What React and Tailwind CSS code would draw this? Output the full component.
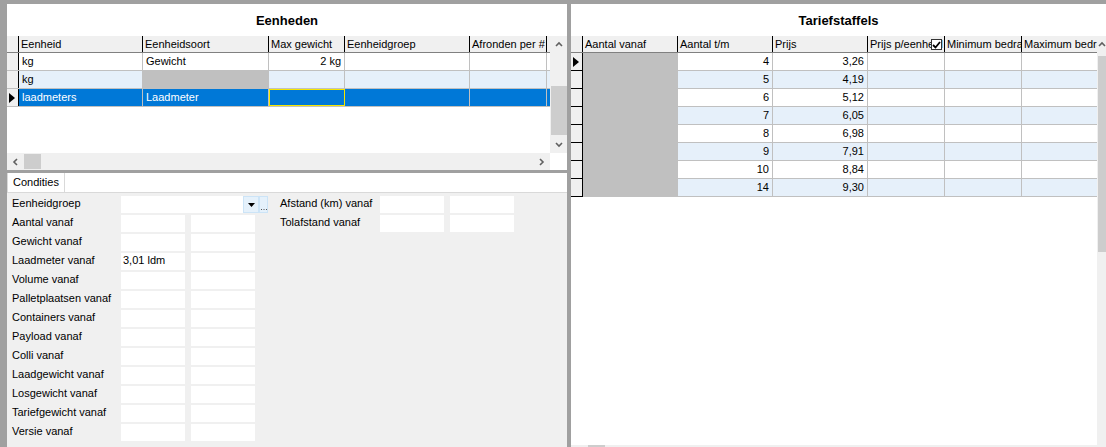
import React from 'react';

const Tri = () => (
    <svg width="6" height="10" viewBox="0 0 6 10" className="ml-[2px]"><polygon points="0,0 6,5 0,10" fill="#000" /></svg>
);

const Chev = ({ dir }) => {
    const paths = {
        up: 'M1 5 L4 2 L7 5',
        down: 'M1 2 L4 5 L7 2',
        left: 'M5 1 L2 4 L5 7',
        right: 'M2 1 L5 4 L2 7',
    };
    const vertical = dir === 'up' || dir === 'down';
    return (
        <svg width={vertical ? 8 : 7} height={vertical ? 7 : 8} viewBox={vertical ? '0 0 8 7' : '0 0 7 8'}>
            <path d={paths[dir]} stroke="#606060" strokeWidth="1.6" fill="none" />
        </svg>
    );
};

const eenhedenCols = [124, 126, 76, 125, 77];
const eenhedenHead = ['Eenheid', 'Eenheidsoort', 'Max gewicht', 'Eenheidgroep', 'Afronden per #'];

const staffels = [
    ['4', '3,26'], ['5', '4,19'], ['6', '5,12'], ['7', '6,05'],
    ['8', '6,98'], ['9', '7,91'], ['10', '8,84'], ['14', '9,30'],
];

const formLabels = [
    'Aantal vanaf', 'Gewicht vanaf', 'Laadmeter vanaf', 'Volume vanaf', 'Palletplaatsen vanaf',
    'Containers vanaf', 'Payload vanaf', 'Colli vanaf', 'Laadgewicht vanaf', 'Losgewicht vanaf',
    'Tariefgewicht vanaf', 'Versie vanaf',
];

const Box = ({ children }) => (
    <div className="w-[64px] h-[17px] bg-white flex items-center pl-[2px] pb-[2px]">{children}</div>
);

const App = () => {
    return (
        <div className="w-[1106px] h-[447px] bg-[#a0a0a0] pt-[4px] pl-[7px] flex overflow-hidden font-['Liberation_Sans',Arial,sans-serif] text-[11px] text-black leading-none">
            {/* Linker paneel */}
            <div className="w-[560px] flex flex-col">
                <div className="h-[166px] bg-white flex flex-col">
                    <div className="h-[32px] flex items-center justify-center font-bold text-[13px]">Eenheden</div>
                    <div className="flex h-[117px]">
                        <div className="w-[543px]">
                            {/* header */}
                            <div className="flex h-[17px] border-b border-[#808080] bg-[#f0f0f0]">
                                <div className="w-[12px] border-r border-black" />
                                {eenhedenHead.map((h, i) => (
                                    <div key={h} style={{ width: eenhedenCols[i] }} className="border-r border-black flex items-center pl-[2px] whitespace-nowrap overflow-hidden">{h}</div>
                                ))}
                            </div>
                            {/* rij 1 */}
                            <div className="flex h-[18px] border-b border-[#c0c0c0]">
                                <div className="w-[12px] bg-[#f0f0f0] border-r border-black" />
                                <div className="w-[124px] border-r border-[#c0c0c0] flex items-center pl-[3px]">kg</div>
                                <div className="w-[126px] border-r border-[#c0c0c0] flex items-center pl-[3px]">Gewicht</div>
                                <div className="w-[76px] border-r border-[#c0c0c0] flex items-center justify-end pr-[3px]">2 kg</div>
                                <div className="w-[125px] border-r border-[#c0c0c0]" />
                                <div className="w-[77px] border-r border-[#c0c0c0]" />
                            </div>
                            {/* rij 2 */}
                            <div className="flex h-[18px] border-b border-[#c0c0c0] bg-[#e6f0fa]">
                                <div className="w-[12px] bg-[#f0f0f0] border-r border-black" />
                                <div className="w-[124px] border-r border-[#c0c0c0] flex items-center pl-[3px]">kg</div>
                                <div className="w-[126px] border-r border-[#c0c0c0] bg-[#c0c0c0]" />
                                <div className="w-[76px] border-r border-[#c0c0c0]" />
                                <div className="w-[125px] border-r border-[#c0c0c0]" />
                                <div className="w-[77px] border-r border-[#c0c0c0]" />
                            </div>
                            {/* rij 3 geselecteerd */}
                            <div className="flex h-[18px] border-b border-[#c0c0c0] bg-[#0078d7] text-white">
                                <div className="w-[12px] bg-[#f0f0f0] border-r border-black flex items-center"><Tri /></div>
                                <div className="w-[124px] border-r border-[#c0c0c0] flex items-center pl-[3px]">laadmeters</div>
                                <div className="w-[126px] border-r border-[#c0c0c0] flex items-center pl-[3px]">Laadmeter</div>
                                <div className="w-[76px] border border-[#f5e600]" />
                                <div className="w-[125px] border-r border-[#c0c0c0]" />
                                <div className="w-[77px] border-r border-[#c0c0c0]" />
                            </div>
                        </div>
                        {/* verticale scrollbar */}
                        <div className="w-[17px] bg-[#f0f0f0] flex flex-col items-center">
                            <div className="h-[17px] flex items-center justify-center"><Chev dir="up" /></div>
                            <div className="h-[33px]" />
                            <div className="w-[16px] h-[49px] bg-[#cdcdcd]" />
                            <div className="h-[1px]" />
                            <div className="h-[17px] flex items-center justify-center"><Chev dir="down" /></div>
                        </div>
                    </div>
                    {/* horizontale scrollbar */}
                    <div className="h-[17px] flex">
                        <div className="w-[543px] bg-[#f0f0f0] flex items-center">
                            <div className="w-[17px] flex justify-center"><Chev dir="left" /></div>
                            <div className="w-[17px] h-[15px] bg-[#cdcdcd]" />
                            <div className="flex-1" />
                            <div className="w-[17px] flex justify-center"><Chev dir="right" /></div>
                        </div>
                        <div className="w-[17px] bg-white" />
                    </div>
                </div>
                <div className="h-[3px]" />
                {/* Condities tab */}
                <div className="flex-1 flex flex-col">
                    <div className="h-[20px] bg-white border-b border-[#d9d9d9] flex">
                        <div className="w-[58px] border-l border-r border-[#d9d9d9] flex items-center justify-center">Condities</div>
                    </div>
                    <div className="flex-1 bg-[#f0f0f0] pt-[3px] pl-[5px] flex flex-col gap-[2px]">
                        <div className="flex h-[17px]">
                            <div className="w-[256px] flex">
                                <div className="w-[109px] flex items-center pb-[3px]">Eenheidgroep</div>
                                <div className="w-[122px] bg-white" />
                                <div className="w-[16px] bg-[#e5f1fb] border border-[#cce4f7] flex items-center justify-center">
                                    <svg width="7" height="4" viewBox="0 0 7 4"><polygon points="0,0 7,0 3.5,4" fill="#000" /></svg>
                                </div>
                                <div className="w-[9px] bg-[#e5f1fb] border border-[#cce4f7] flex items-end justify-center pb-[2px]">
                                    <svg width="6" height="1" viewBox="0 0 6 1">
                                        <rect x="0" y="0" width="1" height="1" fill="#555" />
                                        <rect x="2.5" y="0" width="1" height="1" fill="#555" />
                                        <rect x="5" y="0" width="1" height="1" fill="#555" />
                                    </svg>
                                </div>
                            </div>
                            <div className="ml-[12px] flex">
                                <div className="w-[100px] flex items-center pb-[3px]">Afstand (km) vanaf</div>
                                <Box />
                                <div className="w-[6px]" />
                                <Box />
                            </div>
                        </div>
                        {formLabels.map((label, i) => (
                            <div key={label} className="flex h-[17px]">
                                <div className="w-[256px] flex">
                                    <div className="w-[109px] flex items-center pb-[3px]">{label}</div>
                                    <Box>{label === 'Laadmeter vanaf' ? '3,01 ldm' : null}</Box>
                                    <div className="w-[6px]" />
                                    <Box />
                                </div>
                                {i === 0 && (
                                    <div className="ml-[12px] flex">
                                        <div className="w-[100px] flex items-center pb-[3px]">Tolafstand vanaf</div>
                                        <Box />
                                        <div className="w-[6px]" />
                                        <Box />
                                    </div>
                                )}
                            </div>
                        ))}
                    </div>
                </div>
            </div>

            <div className="w-[4px]" />

            {/* Rechter paneel */}
            <div className="w-[535px] bg-white flex flex-col">
                <div className="h-[32px] flex items-center justify-center font-bold text-[13px]">Tariefstaffels</div>
                <div className="flex h-[409px]">
                    <div className="w-[526px]">
                        <div className="flex h-[17px] border-b border-[#808080] bg-[#f0f0f0]">
                            <div className="w-[12px] border-r border-black" />
                            <div className="w-[95px] border-r border-black flex items-center pl-[2px]">Aantal vanaf</div>
                            <div className="w-[95px] border-r border-black flex items-center pl-[2px]">Aantal t/m</div>
                            <div className="w-[95px] border-r border-black flex items-center pl-[2px]">Prijs</div>
                            <div className="w-[77px] border-r border-black flex items-center pl-[2px] whitespace-nowrap overflow-hidden relative">
                                Prijs p/eenheid
                                <div className="absolute right-[2px] top-[3px] w-[11px] h-[11px] bg-white border border-[#333] flex items-center justify-center">
                                    <svg width="9" height="8" viewBox="0 0 9 8"><path d="M1 4 L3.5 6.5 L8 1" stroke="#000" strokeWidth="1.8" fill="none" /></svg>
                                </div>
                            </div>
                            <div className="w-[77px] border-r border-black flex items-center pl-[2px] whitespace-nowrap overflow-hidden">Minimum bedrag</div>
                            <div className="w-[75px] flex items-center pl-[2px] whitespace-nowrap overflow-hidden">Maximum bedrag</div>
                        </div>
                        {staffels.map(([n, p], i) => (
                            <div key={n} className={`flex h-[18px] ${i % 2 === 1 ? 'bg-[#e6f0fa]' : 'bg-white'}`}>
                                <div className="w-[12px] bg-[#f0f0f0] border-r border-b border-black flex items-center">{i === 0 && <Tri />}</div>
                                <div className="w-[95px] bg-[#c0c0c0]" />
                                <div className="w-[95px] border-r border-b border-[#c0c0c0] flex items-center justify-end pr-[3px]">{n}</div>
                                <div className="w-[95px] border-r border-b border-[#c0c0c0] flex items-center justify-end pr-[3px]">{p}</div>
                                <div className="w-[77px] border-r border-b border-[#c0c0c0]" />
                                <div className="w-[77px] border-r border-b border-[#c0c0c0]" />
                                <div className="w-[75px] border-b border-[#c0c0c0]" />
                            </div>
                        ))}
                    </div>
                    <div className="w-[9px] bg-[#f0f0f0] flex flex-col">
                        <div className="h-[17px] flex items-center pl-[1px] overflow-hidden"><Chev dir="up" /></div>
                        <div className="h-[3px]" />
                        <div className="ml-[1px] h-[196px] bg-[#cdcdcd]" />
                    </div>
                </div>
                <div className="h-[2px] bg-[#f0f0f0] flex">
                    <div className="w-[17px]" />
                    <div className="w-[17px] bg-[#cdcdcd]" />
                </div>
            </div>
        </div>
    );
};

export default App;
